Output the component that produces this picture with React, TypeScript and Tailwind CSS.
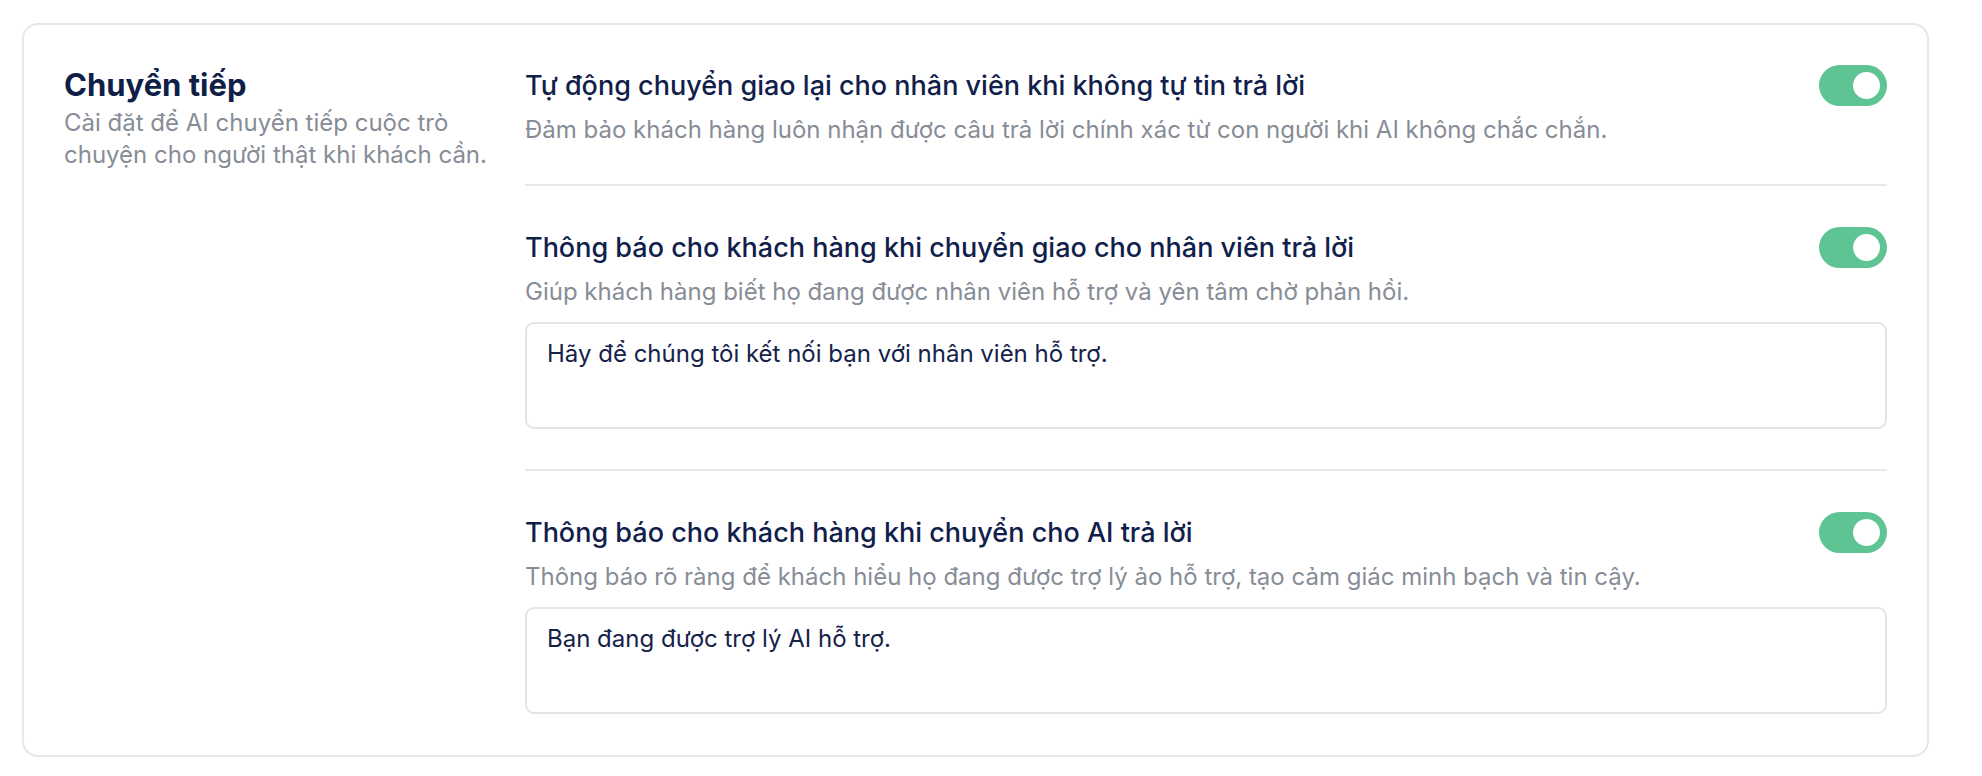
import { useState } from "react";

type Item = {
  title: string;
  desc: string;
  message?: string;
};

const items: Item[] = [
  {
    title: "Tự động chuyển giao lại cho nhân viên khi không tự tin trả lời",
    desc: "Đảm bảo khách hàng luôn nhận được câu trả lời chính xác từ con người khi AI không chắc chắn.",
  },
  {
    title: "Thông báo cho khách hàng khi chuyển giao cho nhân viên trả lời",
    desc: "Giúp khách hàng biết họ đang được nhân viên hỗ trợ và yên tâm chờ phản hồi.",
    message: "Hãy để chúng tôi kết nối bạn với nhân viên hỗ trợ.",
  },
  {
    title: "Thông báo cho khách hàng khi chuyển cho AI trả lời",
    desc: "Thông báo rõ ràng để khách hiểu họ đang được trợ lý ảo hỗ trợ, tạo cảm giác minh bạch và tin cậy.",
    message: "Bạn đang được trợ lý AI hỗ trợ.",
  },
];

function Toggle({ on, onChange }: { on: boolean; onChange: () => void }) {
  return (
    <button
      type="button"
      onClick={onChange}
      className={`flex h-[41px] w-[68px] shrink-0 items-center rounded-full px-[7px] ${
        on ? "justify-end bg-[#5fc494]" : "justify-start bg-[#d1d5db]"
      }`}
    >
      <span className="h-[27px] w-[27px] rounded-full bg-white" />
    </button>
  );
}

function Section({ item, first, last }: { item: Item; first: boolean; last: boolean }) {
  const [on, setOn] = useState(true);
  const [text, setText] = useState(item.message ?? "");

  return (
    <div
      className={`${first ? "" : "pt-[41px]"} ${
        last ? "" : item.message ? "border-b-2 border-[#e5e7eb] pb-[40px]" : "border-b-2 border-[#e5e7eb] pb-[38px]"
      }`}
    >
      <div className="flex h-[41px] items-center justify-between">
        <h3 className="text-[27px] font-medium leading-[32px] text-[#10204a]">{item.title}</h3>
        <Toggle on={on} onChange={() => setOn(!on)} />
      </div>
      <p className="mt-[8px] text-[24px] leading-[32px] text-[#878d96]">{item.desc}</p>
      {item.message !== undefined && (
        <textarea
          value={text}
          onChange={(e) => setText(e.target.value)}
          className="mt-[14px] block h-[107px] w-full resize-none rounded-[9px] border-2 border-[#e2e5ea] px-[20px] pt-[14px] text-[24px] leading-[32px] text-[#15224a] outline-none"
        />
      )}
    </div>
  );
}

export default function App() {
  return (
    <main className="min-h-screen bg-white pl-[22px] pt-[23px] font-['Inter',sans-serif] [font-optical-sizing:none]">
      <div className="flex w-[1907px] rounded-[16px] border-2 border-[#e5e7eb] p-[40px] pb-[41px]">
        <div className="w-[440px] shrink-0">
          <h2 className="text-[31px] font-bold leading-[40px] text-[#0f1f47]">Chuyển tiếp</h2>
          <p className="mt-[2px] text-[24px] leading-[32px] text-[#878d96]">
            Cài đặt để AI chuyển tiếp cuộc trò chuyện cho người thật khi khách cần.
          </p>
        </div>

        <div className="ml-[21px] flex-1">
          {items.map((item, i) => (
            <Section key={item.title} item={item} first={i === 0} last={i === items.length - 1} />
          ))}
        </div>
      </div>
    </main>
  );
}
